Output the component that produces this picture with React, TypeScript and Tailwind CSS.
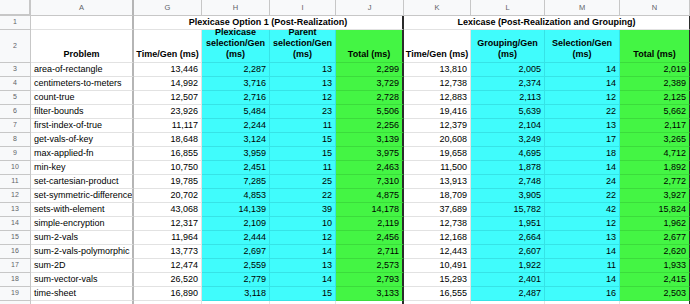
import React from 'react';

type Row = [string, string, string, string, string, string, string, string, string];

const rows: Row[] = [
  ['area-of-rectangle', '13,446', '2,287', '13', '2,299', '13,810', '2,005', '14', '2,019'],
  ['centimeters-to-meters', '14,992', '3,716', '13', '3,729', '12,738', '2,374', '14', '2,389'],
  ['count-true', '12,507', '2,716', '12', '2,728', '12,883', '2,113', '12', '2,125'],
  ['filter-bounds', '23,926', '5,484', '23', '5,506', '19,416', '5,639', '22', '5,662'],
  ['first-index-of-true', '11,117', '2,244', '11', '2,256', '12,379', '2,104', '13', '2,117'],
  ['get-vals-of-key', '18,648', '3,124', '15', '3,139', '20,608', '3,249', '17', '3,265'],
  ['max-applied-fn', '16,855', '3,959', '15', '3,975', '19,658', '4,695', '18', '4,712'],
  ['min-key', '10,750', '2,451', '11', '2,463', '11,500', '1,878', '14', '1,892'],
  ['set-cartesian-product', '19,785', '7,285', '25', '7,310', '13,913', '2,748', '24', '2,772'],
  ['set-symmetric-difference', '20,702', '4,853', '22', '4,875', '18,709', '3,905', '22', '3,927'],
  ['sets-with-element', '43,068', '14,139', '39', '14,178', '37,689', '15,782', '42', '15,824'],
  ['simple-encryption', '12,317', '2,109', '10', '2,119', '12,738', '1,951', '12', '1,962'],
  ['sum-2-vals', '11,964', '2,444', '12', '2,456', '12,168', '2,664', '13', '2,677'],
  ['sum-2-vals-polymorphic', '13,773', '2,697', '14', '2,711', '12,443', '2,607', '14', '2,620'],
  ['sum-2D', '12,474', '2,559', '13', '2,573', '10,491', '1,922', '11', '1,933'],
  ['sum-vector-vals', '26,520', '2,779', '14', '2,793', '15,293', '2,401', '14', '2,415'],
  ['time-sheet', '16,890', '3,118', '15', '3,133', '16,555', '2,487', '16', '2,503'],
];

// cell styles per data column G..N
const colCls = [
  'bg-white border-r border-b border-[#e2e2e2]',
  'bg-[#40fcfc] border-r border-b border-[#36e3e6]',
  'bg-[#40fcfc] border-r border-b border-[#36e3e6]',
  'bg-[#44f544] border-b border-[#3bdc3b] border-r-2 border-r-[#2b2b2b]',
  'bg-white border-r border-b border-[#e2e2e2]',
  'bg-[#40fcfc] border-r border-b border-[#36e3e6]',
  'bg-[#40fcfc] border-r border-b border-[#36e3e6]',
  'bg-[#44f544] border-b border-[#3bdc3b] border-r border-r-[#2b2b2b]',
];

const letters = ['A', 'G', 'H', 'I', 'J', 'K', 'L', 'M', 'N'];

const rowNum = 'bg-[#f8f9fa] border-r border-b border-[#c7c7c7] flex items-center justify-center text-[7px] text-[#5f6368]';
const probCell = 'bg-white border-b border-[#e2e2e2] border-r-2 border-r-[#b5b5b5]';

const heads = [
  'Time/Gen (ms)',
  'Plexicase selection/Gen (ms)',
  'Parent selection/Gen (ms)',
  'Total (ms)',
  'Time/Gen (ms)',
  'Grouping/Gen (ms)',
  'Selection/Gen (ms)',
  'Total (ms)',
];

export default function App() {
  return (
    <div className="w-[690px] h-[304px] overflow-hidden bg-white font-['Liberation_Sans',Arial,sans-serif] text-black">
      <div className="grid grid-cols-[31px_103px_68px_68px_66px_68px_67px_74px_75px_70px] grid-rows-[16px_14px_33px_repeat(18,14px)]">
        {/* column letters */}
        <div className="bg-[#f8f9fa] border-r-2 border-b-2 border-[#c7c7c7]" />
        {letters.map((l, i) => (
          <div
            key={l}
            className={
              i === 0
                ? 'bg-[#f8f9fa] border-b border-[#c7c7c7] border-r-2 border-r-[#b5b5b5] flex items-center justify-center text-[7.5px] text-[#5f6368]'
                : 'bg-[#f8f9fa] border-r border-b border-[#c7c7c7] flex items-center justify-center text-[7.5px] text-[#5f6368]'
            }
          >
            {l}
          </div>
        ))}

        {/* row 1 */}
        <div className={rowNum}>1</div>
        <div className={probCell} />
        <div className="col-span-4 bg-white border-b border-[#e2e2e2] border-r-2 border-r-[#2b2b2b] flex items-center justify-center text-[9px] font-bold">
          Plexicase Option 1 (Post-Realization)
        </div>
        <div className="col-span-4 bg-white border-b border-[#e2e2e2] border-r border-r-[#2b2b2b] flex items-center justify-center text-[9px] font-bold">
          Lexicase (Post-Realization and Grouping)
        </div>

        {/* row 2 */}
        <div className={rowNum}>2</div>
        <div className={`${probCell} flex items-end justify-center pb-[2px] text-[9px] font-bold leading-[11px]`}>Problem</div>
        {heads.map((h, i) => (
          <div
            key={i}
            className={`${colCls[i]} flex items-end justify-center px-[1px] pb-[2px] text-center text-[9px] font-bold leading-[11px] ${
              h === 'Time/Gen (ms)' ? 'whitespace-nowrap' : ''
            }`}
          >
            {h}
          </div>
        ))}

        {/* data */}
        {rows.map((r, ri) => (
          <React.Fragment key={r[0]}>
            <div className={rowNum}>{ri + 3}</div>
            <div className={`${probCell} flex items-center pl-[3px] text-[9px] whitespace-nowrap overflow-hidden`}>{r[0]}</div>
            {r.slice(1).map((v, ci) => (
              <div key={ci} className={`${colCls[ci]} flex items-center justify-end pr-[3px] text-[9px]`}>
                {v}
              </div>
            ))}
          </React.Fragment>
        ))}

        {/* row 20, cut off at the bottom edge */}
        <div className="bg-[#f8f9fa] border-r border-[#c7c7c7]" />
        <div className="bg-white border-r-2 border-r-[#b5b5b5]" />
        {colCls.map((_, ci) => (
          <div
            key={ci}
            className={
              ci === 3
                ? 'bg-white border-r-2 border-r-[#2b2b2b]'
                : ci === 7
                ? 'bg-white border-r border-r-[#2b2b2b]'
                : 'bg-white border-r border-[#e2e2e2]'
            }
          />
        ))}
      </div>
    </div>
  );
}
